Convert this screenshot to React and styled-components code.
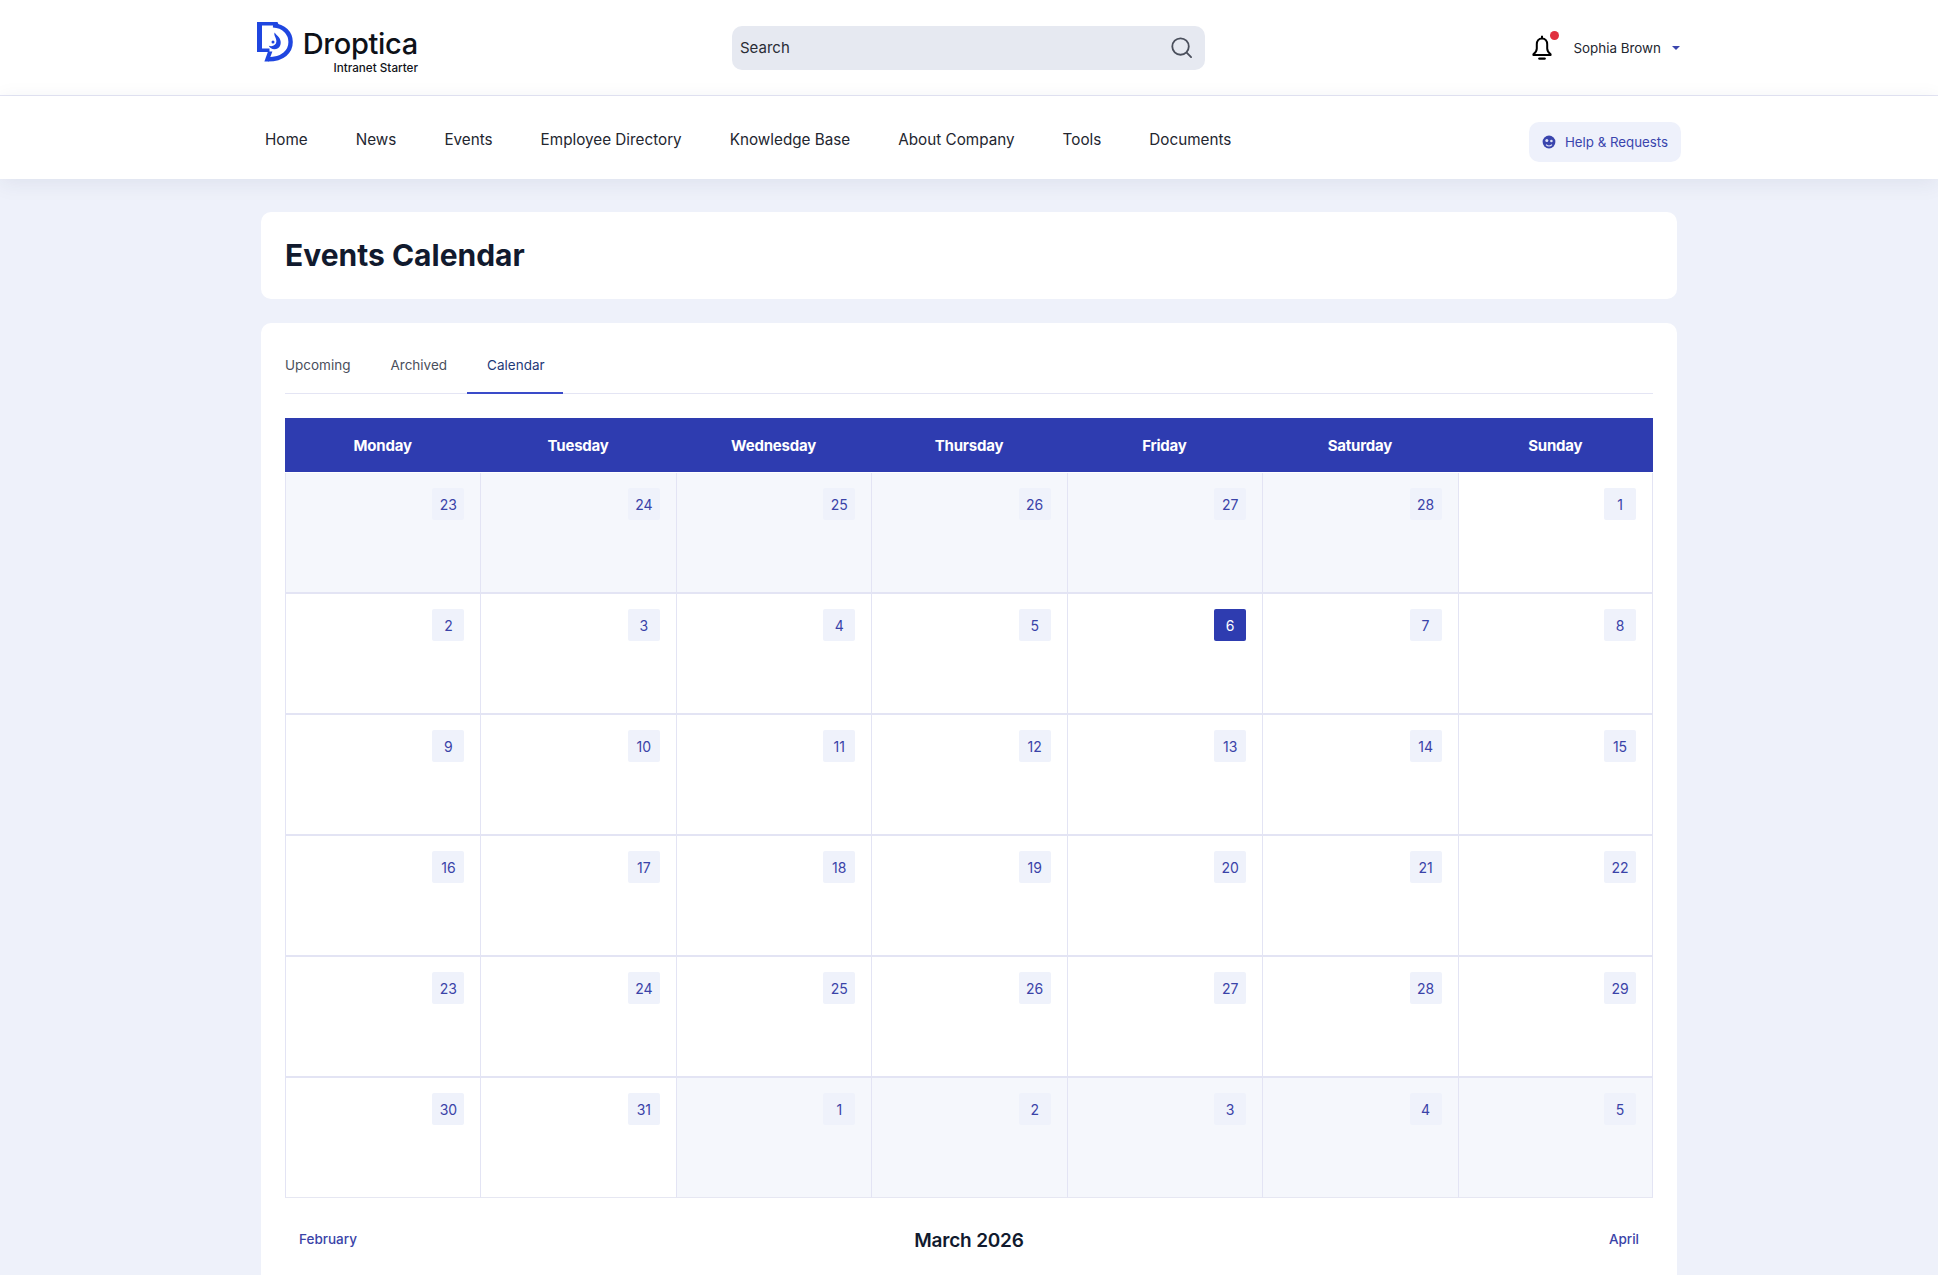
import React from 'react';
import styled, { createGlobalStyle } from 'styled-components';

const NAV_ITEMS = ['Home', 'News', 'Events', 'Employee Directory', 'Knowledge Base', 'About Company', 'Tools', 'Documents'];
const WEEKDAYS = ['Monday', 'Tuesday', 'Wednesday', 'Thursday', 'Friday', 'Saturday', 'Sunday'];

const prevMonth = [23, 24, 25, 26, 27, 28];
const march = Array.from({ length: 31 }, (_, i) => i + 1);
const nextMonth = [1, 2, 3, 4, 5];

const DAYS = [
  ...prevMonth.map((day) => ({ day, outside: true })),
  ...march.map((day) => ({ day, today: day === 6 })),
  ...nextMonth.map((day) => ({ day, outside: true })),
];

const App = () => (
  <Page>
    <GlobalStyle />
    <TopBar>
      <TopInner>
        <Brand>
          <LogoMark />
          <BrandText>
            <BrandName>Droptica</BrandName>
            <BrandSub>Intranet Starter</BrandSub>
          </BrandText>
        </Brand>
        <SearchBox>
          <SearchLabel>Search</SearchLabel>
          <svg width="23" height="23" viewBox="0 0 24 24" fill="none" stroke="#4a4f5c" strokeWidth="1.9" strokeLinecap="round">
            <circle cx="11" cy="11" r="8.6" />
            <path d="M17.4 17.4 22 22" />
          </svg>
        </SearchBox>
        <UserArea>
          <BellWrap>
            <svg width="20" height="25" viewBox="0 0 20 25" fill="none" stroke="#000" strokeWidth="2" strokeLinejoin="round">
              <path d="M10 3.4c-3.3 0-5.2 2.5-5.2 5.8v4.4c0 2.4-1 4-3.4 5.8v.6h17.2v-.6c-2.4-1.8-3.4-3.4-3.4-5.8V9.2c0-3.3-1.9-5.8-5.2-5.8Z" />
              <path d="M10 .8v2.6" />
              <path d="M7.4 23.6h5.2" strokeWidth="2.4" strokeLinecap="round" />
            </svg>
            <BellDot />
          </BellWrap>
          <UserName>Sophia Brown</UserName>
          <Caret />
        </UserArea>
      </TopInner>
    </TopBar>

    <NavBar>
      <NavInner>
        <NavList>
          {NAV_ITEMS.map((item) => (
            <NavLink key={item}>{item}</NavLink>
          ))}
        </NavList>
        <HelpButton>
          <svg width="14" height="14" viewBox="0 0 14 14">
            <circle cx="7" cy="7" r="6.4" fill="#3a45ad" />
            <circle cx="4.8" cy="5.4" r="1.5" fill="#dfe3f6" />
            <circle cx="9.4" cy="6" r="1.3" fill="#dfe3f6" />
            <path d="M4 9.6c1.6 1.8 4.4 1.8 6 0" fill="none" stroke="#dfe3f6" strokeWidth="1.1" />
          </svg>
          Help &amp; Requests
        </HelpButton>
      </NavInner>
    </NavBar>

    <Main>
      <TitleCard>
        <Title>Events Calendar</Title>
      </TitleCard>
      <ContentCard>
        <Tabs>
          <Tab>Upcoming</Tab>
          <Tab>Archived</Tab>
          <Tab $active>Calendar</Tab>
        </Tabs>
        <Calendar>
          {WEEKDAYS.map((name) => (
            <Weekday key={name}>{name}</Weekday>
          ))}
          {DAYS.map(({ day, outside, today }, i) => (
            <DayCell key={i} $outside={outside} $lastRow={i >= 35}>
              <DayBadge $today={today}>{day}</DayBadge>
            </DayCell>
          ))}
        </Calendar>
        <MonthPager>
          <MonthLink>February</MonthLink>
          <MonthTitle>March 2026</MonthTitle>
          <MonthLink $right>April</MonthLink>
        </MonthPager>
      </ContentCard>
    </Main>
  </Page>
);

const LogoMark = () => (
  <svg width="36" height="40" viewBox="0 0 36 40" fill="#1f46e0">
    <path d="M0 0H20.5L22 3.5H5V26.5H12.5V30H0Z" />
    <path d="M16 3.4C27 4 33.6 11 33.6 20C33.6 29.5 26 37.2 11 37.4" fill="none" stroke="#1f46e0" strokeWidth="4.4" />
    <path d="M11 29.5H15.4L11.6 39.6H7.4Z" />
    <path d="M17.6 10.4C16.4 13.6 19.6 15.6 19.4 19.6C19.2 23.2 15.6 25 11.8 23.8C13.2 27 17.4 28.4 21 26.2C24.6 23.6 24.4 18.6 21.8 15.2C20.4 13.4 18.8 12.4 17.6 10.4Z" />
    <circle cx="16" cy="20" r="1.5" />
  </svg>
);

const GlobalStyle = createGlobalStyle`
  html, body {
    margin: 0;
    padding: 0;
    background: #eef1fa;
  }
  body {
    font-family: "Inter", "Liberation Sans", sans-serif;
  }
`;

const Page = styled.div`
  height: 1275px;
  overflow: hidden;
`;

const TopBar = styled.header`
  height: 95px;
  background: #fff;
  border-bottom: 1px solid #e4e5f4;
`;

const TopInner = styled.div`
  width: 1424px;
  height: 100%;
  margin: 0 auto;
  display: grid;
  grid-template-columns: 475px 473px 1fr;
  align-items: center;
`;

const Brand = styled.div`
  display: flex;
  gap: 10px;
  margin-top: 1px;
`;

const BrandText = styled.div`
  display: flex;
  flex-direction: column;
  align-items: flex-end;
  width: 115px;
  padding-top: 6px;
`;

const BrandName = styled.span`
  font-size: 29px;
  line-height: 32px;
  font-weight: 500;
  letter-spacing: -0.3px;
  color: #0e1118;
`;

const BrandSub = styled.span`
  margin-top: 1px;
  font-size: 11.7px;
  line-height: 14px;
  font-weight: 500;
  white-space: nowrap;
  color: #11131a;
`;

const SearchBox = styled.div`
  height: 44px;
  padding: 0 12px 0 8px;
  background: #e6e9f1;
  border-radius: 10px;
  display: flex;
  align-items: center;
  justify-content: space-between;
`;

const SearchLabel = styled.span`
  font-size: 15px;
  color: #2a2d36;
`;

const UserArea = styled.div`
  display: flex;
  align-items: center;
  justify-content: flex-end;
`;

const BellWrap = styled.div`
  position: relative;
  display: flex;
  margin-right: 21px;
`;

const BellDot = styled.span`
  position: absolute;
  top: -4px;
  right: -7px;
  width: 9px;
  height: 9px;
  border-radius: 50%;
  background: #e0303f;
`;

const UserName = styled.span`
  font-size: 13.4px;
  color: #23262f;
  margin-right: 11px;
`;

const Caret = styled.span`
  width: 0;
  height: 0;
  margin-right: 1px;
  border-left: 4px solid transparent;
  border-right: 4px solid transparent;
  border-top: 4px solid #3a45ad;
`;

const NavBar = styled.nav`
  position: relative;
  height: 83px;
  background: #fff;
  box-shadow: 0 4px 20px rgba(40, 50, 90, 0.08);
`;

const NavInner = styled.div`
  width: 1424px;
  height: 100%;
  margin: 0 auto;
  padding: 9px 0 0 8px;
  box-sizing: border-box;
  display: flex;
  align-items: center;
  justify-content: space-between;
`;

const NavList = styled.div`
  display: flex;
  gap: 48px;
  margin-top: -5px;
`;

const NavLink = styled.a`
  font-size: 15.25px;
  color: #23262f;
`;

const HelpButton = styled.button`
  width: 152px;
  height: 40px;
  border: 0;
  border-radius: 10px;
  background: #eef1fb;
  color: #3a45ad;
  font: inherit;
  font-size: 13.3px;
  display: flex;
  align-items: center;
  justify-content: center;
  gap: 9px;
`;

const Main = styled.main`
  width: 1416px;
  margin: 33px auto 0;
  display: flex;
  flex-direction: column;
  gap: 24px;
`;

const Card = styled.section`
  background: #fff;
  border-radius: 10px;
  padding: 0 24px;
`;

const TitleCard = styled(Card)`
  height: 87px;
  display: flex;
  align-items: center;
`;

const Title = styled.h1`
  margin: -2px 0 0;
  font-size: 30px;
  font-weight: 700;
  color: #111a2e;
`;

const ContentCard = styled(Card)`
  padding-bottom: 40px;
`;

const Tabs = styled.div`
  display: flex;
  height: 71px;
  box-sizing: border-box;
  padding-top: 14px;
  border-bottom: 1px solid #e4e5f4;
`;

const Tab = styled.a`
  display: flex;
  align-items: center;
  padding: 0 ${(p) => (p.$active ? '18.5px' : '20px')} 0 20px;
  margin-bottom: -1px;
  font-size: 13.5px;
  color: ${(p) => (p.$active ? '#1f3a78' : '#4a4f5c')};
  border-bottom: 2px solid ${(p) => (p.$active ? '#3a4bc9' : 'transparent')};

  &:first-child {
    padding-left: 0;
  }
`;

const Calendar = styled.div`
  display: grid;
  grid-template-columns: repeat(7, 1fr);
  grid-template-rows: 55px repeat(5, 121px) 120px;
  margin-top: 24px;
`;

const Weekday = styled.div`
  height: 54px;
  display: flex;
  align-items: center;
  justify-content: center;
  background: #2e3cb0;
  color: #fff;
  font-size: 15px;
  font-weight: 700;
  letter-spacing: -0.2px;
`;

const DayCell = styled.div`
  display: flex;
  justify-content: flex-end;
  align-items: flex-start;
  padding: 15px 16px 0;
  box-sizing: border-box;
  background: ${(p) => (p.$outside ? '#f5f7fc' : '#fff')};
  border-left: 1px solid #e3e4f4;
  border-bottom: ${(p) => (p.$lastRow ? '1px solid #e6e7f2' : '2px solid #e3e4f4')};

  &:nth-child(7n) {
    border-right: 1px solid #e3e4f4;
  }
`;

const DayBadge = styled.span`
  width: 32px;
  height: 32px;
  display: flex;
  align-items: center;
  justify-content: center;
  border-radius: 2px;
  font-size: 14px;
  background: ${(p) => (p.$today ? '#2e3cb0' : '#eff2fb')};
  color: ${(p) => (p.$today ? '#fff' : '#3a43a8')};
`;

const MonthPager = styled.div`
  display: grid;
  grid-template-columns: 1fr auto 1fr;
  align-items: center;
  padding: 27px 14px 0;
`;

const MonthLink = styled.a`
  font-size: 13.5px;
  font-weight: 500;
  color: #3a43a8;
  text-align: ${(p) => (p.$right ? 'right' : 'left')};
`;

const MonthTitle = styled.span`
  margin-top: 4px;
  font-size: 19px;
  font-weight: 600;
  letter-spacing: -0.2px;
  color: #111a2e;
`;

export default App;
